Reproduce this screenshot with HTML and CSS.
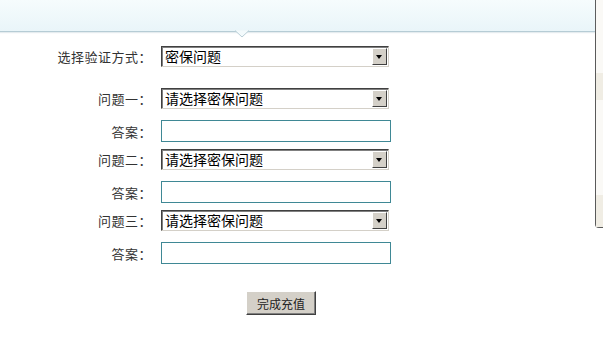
FILE: index.html
```html
<!DOCTYPE html>
<html>
<head>
    <title>密保验证</title>
    <link rel="stylesheet" href="styles.css">
</head>
<body>
    <div class="page">
        <div class="main">
            <div class="top-bar">
                <svg class="notch" width="14" height="8" viewBox="0 0 14 8">
                    <path d="M0 0.5 L7 7 L14 0.5" fill="#f3fafc" stroke="#b9ced6" stroke-width="1"/>
                </svg>
            </div>

            <div class="form">
                <div class="row row-first">
                    <label class="label">选择验证方式：</label>
                    <div class="select-wrap">
                        <select class="select">
                            <option>密保问题</option>
                        </select>
                    </div>
                </div>

                <div class="row row-q1">
                    <label class="label">问题一：</label>
                    <div class="select-wrap">
                        <select class="select">
                            <option>请选择密保问题</option>
                        </select>
                    </div>
                </div>
                <div class="row row-a">
                    <label class="label">答案：</label>
                    <input class="answer" type="text">
                </div>

                <div class="row row-q">
                    <label class="label">问题二：</label>
                    <div class="select-wrap">
                        <select class="select">
                            <option>请选择密保问题</option>
                        </select>
                    </div>
                </div>
                <div class="row row-a">
                    <label class="label">答案：</label>
                    <input class="answer" type="text">
                </div>

                <div class="row row-q">
                    <label class="label">问题三：</label>
                    <div class="select-wrap">
                        <select class="select">
                            <option>请选择密保问题</option>
                        </select>
                    </div>
                </div>
                <div class="row row-a">
                    <label class="label">答案：</label>
                    <input class="answer" type="text">
                </div>

                <div class="actions">
                    <button class="submit-btn">完成充值</button>
                </div>
            </div>
        </div>

        <div class="side">
            <div class="side-panel">
                <div class="side-band band-1"></div>
                <div class="side-band band-2"></div>
            </div>
        </div>
    </div>
</body>
</html>
```

FILE: styles.css
```css
body {
    margin: 0;
    background: #fff;
    font-family: "Noto Sans CJK SC", "Liberation Sans", sans-serif;
    font-size: 13px;
    color: #333;
}
.page {
    display: flex;
    width: 603px;
    height: 345px;
    overflow: hidden;
}
.main {
    width: 595px;
    flex-shrink: 0;
}
.top-bar {
    position: relative;
    height: 31px;
    background: linear-gradient(#f6fcfd, #e9f5f9);
    border-bottom: 1px solid #b6ccd5;
    box-shadow: 0 1px 1px rgba(150, 180, 190, 0.25);
}
.notch {
    position: absolute;
    left: 235px;
    bottom: -7px;
}
.form {
    padding-top: 14px;
}
.row {
    display: flex;
    align-items: center;
    gap: 9px;
}
.row-q1 {
    margin-top: 21px;
}
.row-a {
    margin-top: 11px;
}
.row-q {
    margin-top: 7px;
}
.label {
    width: 152px;
    text-align: right;
    line-height: 21px;
    letter-spacing: 0.5px;
}
.select-wrap {
    position: relative;
    width: 228px;
    height: 21px;
}
.select {
    appearance: none;
    -webkit-appearance: none;
    width: 228px;
    height: 21px;
    margin: 0;
    padding: 0 20px 0 3px;
    border: 1px solid;
    border-color: #404040 #d4d0c8 #d4d0c8 #404040;
    box-shadow: inset 1px 1px 0 #808080;
    border-radius: 0;
    background: #fff;
    font-family: inherit;
    font-size: 14px;
    line-height: 19px;
    color: #000;
}
.select-wrap::after {
    content: "";
    position: absolute;
    right: 2px;
    top: 2px;
    width: 15px;
    height: 17px;
    box-sizing: border-box;
    background: #d4d0c8;
    border: 1px solid;
    border-color: #fff #404040 #404040 #fff;
    pointer-events: none;
}
.select-wrap::before {
    content: "";
    position: absolute;
    right: 7px;
    top: 9px;
    width: 0;
    height: 0;
    border-left: 3px solid transparent;
    border-right: 3px solid transparent;
    border-top: 4px solid #000;
    z-index: 1;
    pointer-events: none;
}
.answer {
    width: 230px;
    height: 22px;
    box-sizing: border-box;
    margin: 0;
    padding: 0 3px;
    border: 1px solid #3f8895;
    background: #fff;
    font-family: inherit;
    font-size: 13px;
}
.actions {
    padding-left: 246px;
    margin-top: 27px;
}
.submit-btn {
    width: 70px;
    height: 24px;
    padding: 0;
    background: #d4d0c8;
    border: 1px solid;
    border-color: #fff #404040 #404040 #fff;
    box-shadow: inset -1px -1px 0 #808080;
    font-family: inherit;
    font-size: 12px;
    color: #222;
    cursor: pointer;
}
.side {
    flex: 1;
}
.side-panel {
    height: 227px;
    border-left: 1px solid #5a5a5a;
    border-bottom: 1px solid #5a5a5a;
    border-bottom-left-radius: 4px;
    background: #faf9f6;
    display: flex;
    flex-direction: column;
}
.side-band {
    background: #f0ede4;
}
.band-1 {
    height: 27px;
    margin-top: 73px;
}
.band-2 {
    height: 32px;
    margin-top: auto;
}
```
